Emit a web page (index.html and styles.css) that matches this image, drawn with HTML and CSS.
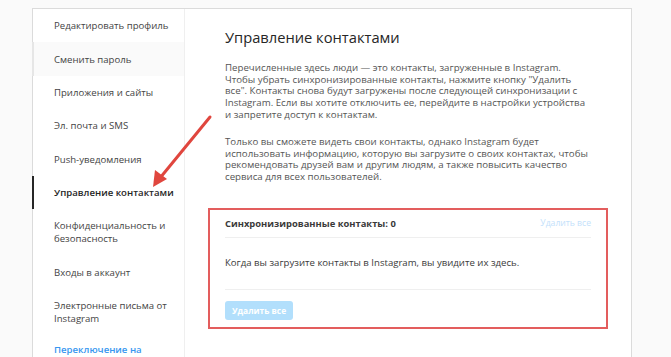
FILE: index.html
```html
<!DOCTYPE html>
<html>
<head>
    <title>Управление контактами</title>
    <link rel="stylesheet" href="styles.css">
</head>
<body>
    <div class="settings">
        <ul class="menu">
            <li class="menu-item">Редактировать профиль</li>
            <li class="menu-item hover">Сменить пароль</li>
            <li class="menu-item">Приложения и сайты</li>
            <li class="menu-item">Эл. почта и SMS</li>
            <li class="menu-item">Push-уведомления</li>
            <li class="menu-item active">Управление контактами</li>
            <li class="menu-item">Конфиденциальность и безопасность</li>
            <li class="menu-item">Входы в аккаунт</li>
            <li class="menu-item">Электронные письма от Instagram</li>
            <li class="menu-item link">Переключение на</li>
        </ul>
        <div class="content">
            <h1>Управление контактами</h1>
            <p>Перечисленные здесь люди — это контакты, загруженные в Instagram. Чтобы убрать синхронизированные контакты, нажмите кнопку "Удалить все". Контакты снова будут загружены после следующей синхронизации с Instagram. Если вы хотите отключить ее, перейдите в настройки устройства и запретите доступ к контактам.</p>
            <p>Только вы сможете видеть свои контакты, однако Instagram будет использовать информацию, которую вы загрузите о своих контактах, чтобы рекомендовать друзей вам и другим людям, а также повысить качество сервиса для всех пользователей.</p>
            <div class="synced">
                <div class="synced-head">
                    <span class="synced-title">Синхронизированные контакты: 0</span>
                    <span class="synced-link">Удалить все</span>
                </div>
                <div class="synced-body">Когда вы загрузите контакты в Instagram, вы увидите их здесь.</div>
                <div class="synced-foot">
                    <button type="button" disabled>Удалить все</button>
                </div>
            </div>
        </div>
    </div>

    <!-- red annotation arrow -->
    <svg class="arrow" width="671" height="357" viewBox="0 0 671 357">
        <line x1="210" y1="117" x2="160" y2="178" stroke="#e0463e" stroke-width="3" stroke-linecap="round"/>
        <polygon points="153,187 155,170 167,179" fill="#e0463e"/>
    </svg>
</body>
</html>
```

FILE: styles.css
```css
body {
    margin: 0;
    background-color: #fafafa;
    font-family: "Open Sans", "Noto Sans", sans-serif;
    color: #262626;
    overflow: hidden;
}

.settings {
    display: flex;
    width: 598px;
    height: 400px;
    margin: 8px 0 0 32px;
    background-color: #fff;
    border: 1px solid #dbdbdb;
    border-bottom: none;
}

/* left menu */
.menu {
    list-style: none;
    margin: 0;
    padding: 0;
    width: 151px;
    flex-shrink: 0;
    border-right: 1px solid #efefef;
}

.menu-item {
    padding: 10.2px 8px 10.2px 20px;
    font-size: 9.6px;
    line-height: 13px;
    color: #444;
    border-left: 2px solid transparent;
    margin-left: -1px;
}

.menu-item.hover {
    background-color: #fafafa;
    border-left-color: #e6e6e6;
}

.menu-item.active {
    font-weight: 600;
    color: #262626;
    border-left-color: #262626;
}

.menu-item.link {
    padding-top: 8px;
    color: #3897f0;
    font-weight: 600;
}

/* right content */
.content {
    flex: 1;
    padding: 18px 38px 0 40px;
}

.content h1 {
    margin: 0 0 15px;
    font-size: 14.7px;
    line-height: 20px;
    font-weight: 400;
    color: #262626;
}

.content p {
    margin: 0 0 15.5px;
    font-size: 9.7px;
    line-height: 11.7px;
    color: #555;
}

.synced {
    margin: 25px -15px 0 -17px;
    border: 2px solid #e35d5d;
    padding: 0 15px;
}

.synced-head {
    display: flex;
    justify-content: space-between;
    align-items: center;
    height: 27px;
    border-bottom: 1px solid #efefef;
}

.synced-title {
    font-size: 9.4px;
    font-weight: 700;
    color: #3a3a3a;
}

.synced-link {
    font-size: 8.6px;
    color: #c3e1fb;
}

.synced-body {
    display: flex;
    align-items: center;
    height: 50px;
    padding-bottom: 1px;
    font-size: 9.6px;
    color: #3a3a3a;
    border-bottom: 1px solid #efefef;
}

.synced-foot {
    padding: 11px 0 7px;
}

.synced-foot button {
    display: block;
    height: 19px;
    padding: 0 7px;
    border: none;
    border-radius: 3px;
    background-color: #b2dffc;
    color: #fff;
    font-family: "Open Sans", sans-serif;
    font-size: 8.4px;
    font-weight: 700;
}

.arrow {
    position: absolute;
    left: 0;
    top: 0;
    pointer-events: none;
}
```
